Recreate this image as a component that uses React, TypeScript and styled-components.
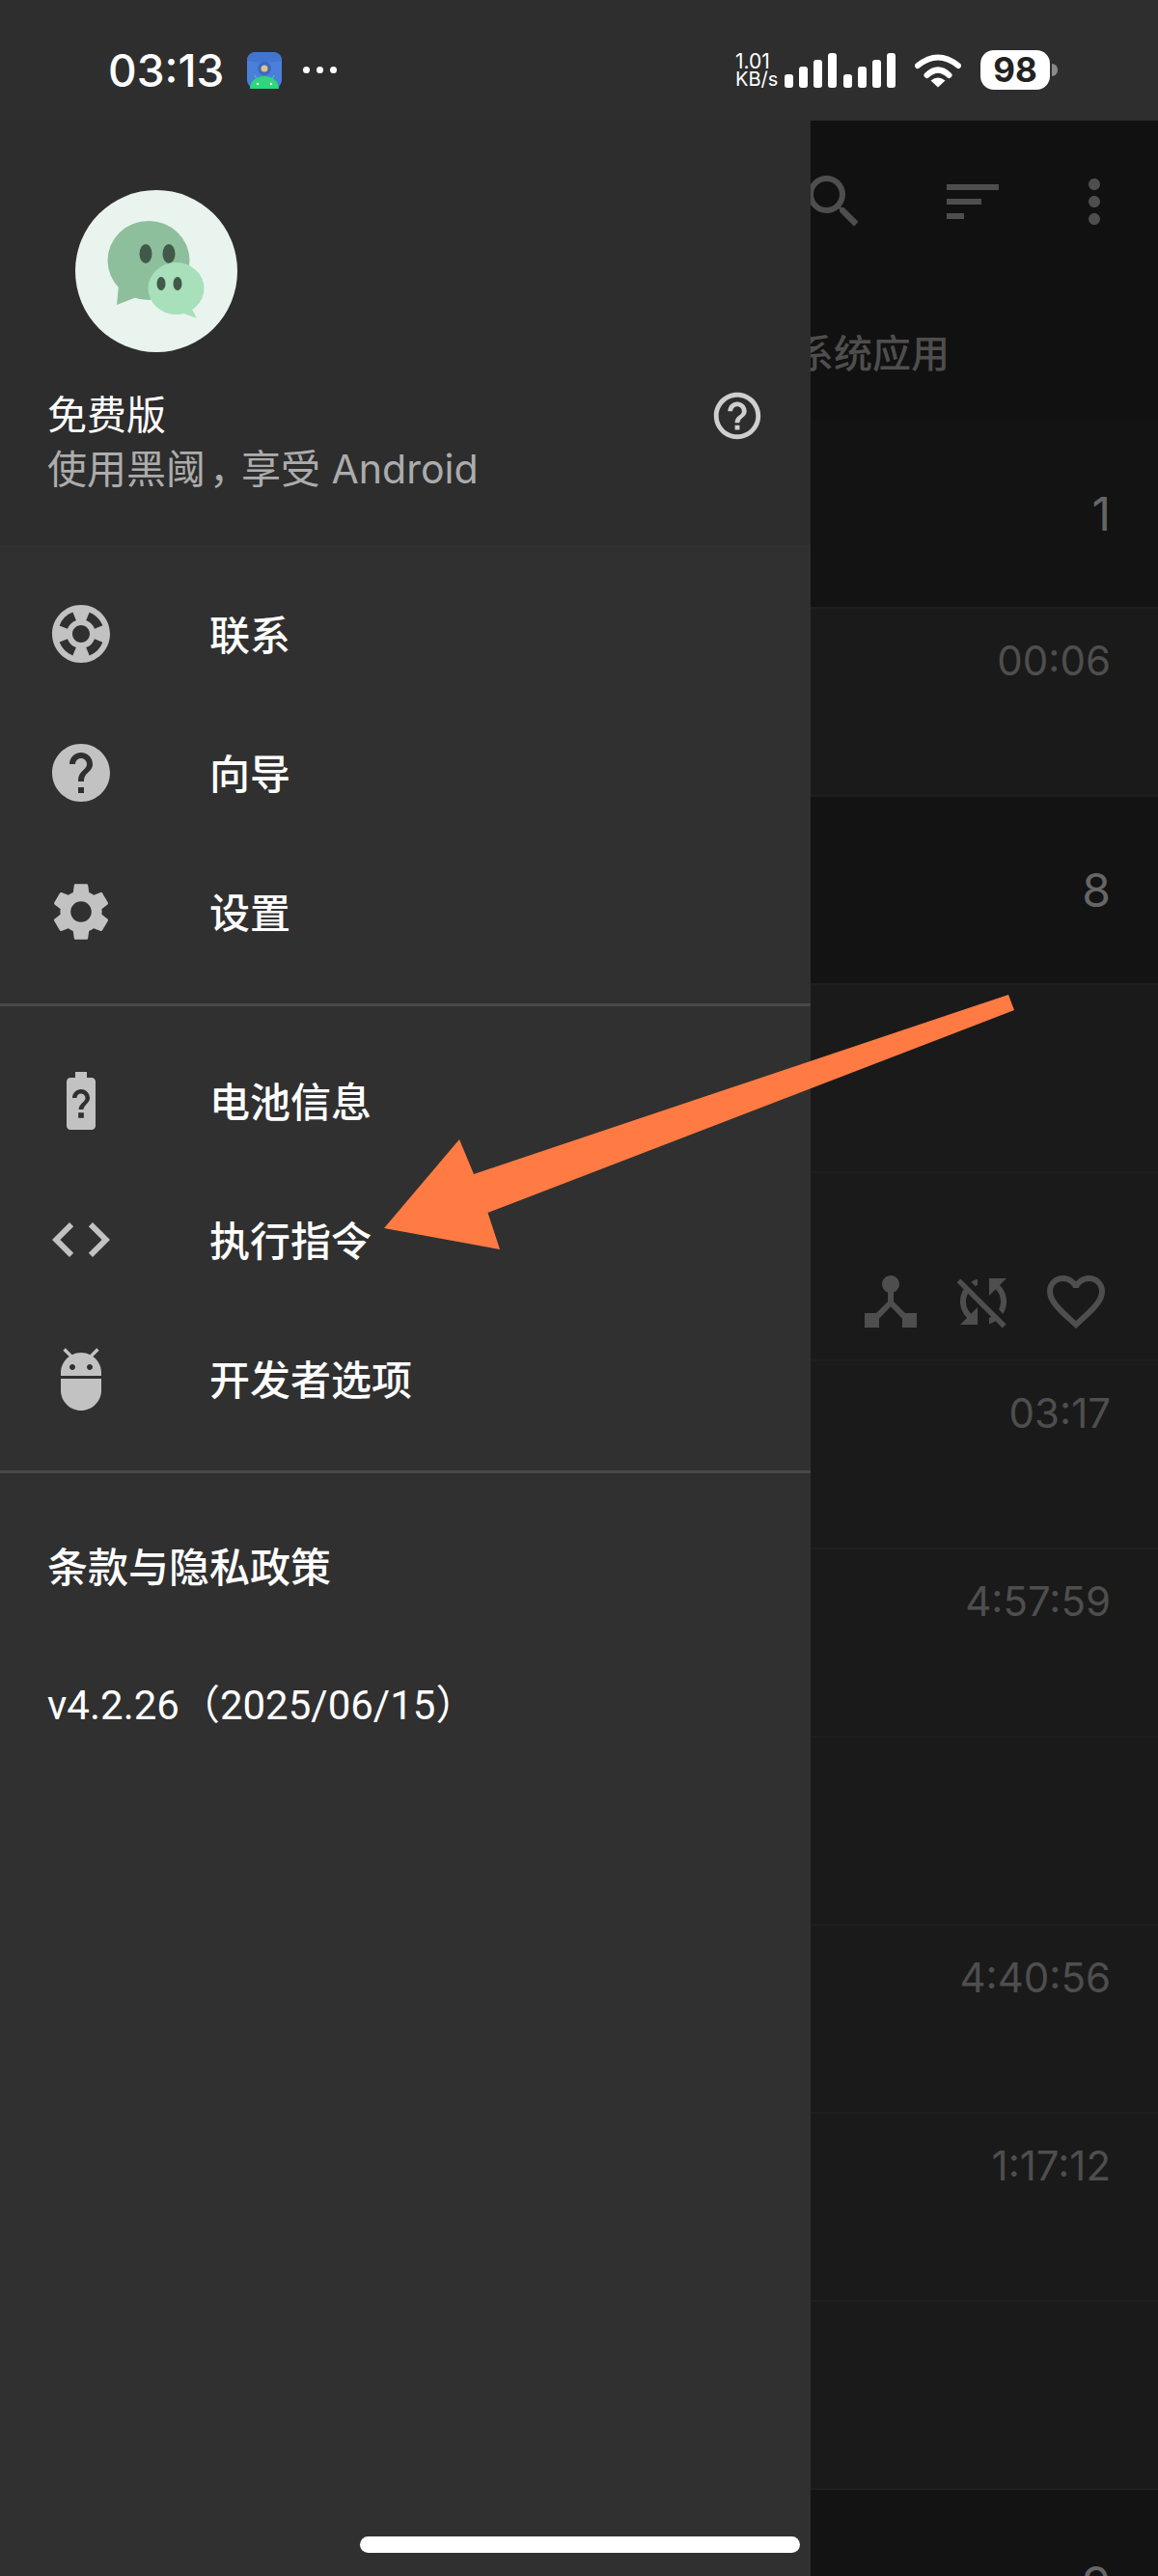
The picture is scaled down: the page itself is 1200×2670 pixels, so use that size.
import {FC, ReactNode} from "react";
import styled, {createGlobalStyle} from "styled-components";
import {
    MdAdb,
    MdBatteryUnknown,
    MdCode,
    MdDeviceHub,
    MdFavoriteBorder,
    MdHelp,
    MdHelpOutline,
    MdMoreVert,
    MdSearch,
    MdSettings,
    MdSort,
    MdSupport,
    MdSyncDisabled,
} from "react-icons/md";

const GlobalStyle = createGlobalStyle`
    html, body {
        margin: 0;
        padding: 0;
        background: #111;
    }
    body {
        font-family: Inter, "Noto Sans CJK SC", sans-serif;
    }
`;

type RowItem = {
    tone: "dark" | "light";
    count?: string;
    time?: string;
    actions?: boolean;
};

const rows: RowItem[] = [
    {tone: "dark", count: "1"},
    {tone: "light", time: "00:06"},
    {tone: "dark", count: "8"},
    {tone: "light"},
    {tone: "light", actions: true},
    {tone: "light", time: "03:17"},
    {tone: "light", time: "4:57:59"},
    {tone: "light"},
    {tone: "light", time: "4:40:56"},
    {tone: "light", time: "1:17:12"},
    {tone: "light"},
    {tone: "dark", count: "9"},
];

const signalHeights = [14, 22, 29, 36, 14, 22, 29, 36];

type MenuItem = {
    icon: ReactNode;
    label: string;
};

const mainMenu: MenuItem[] = [
    {icon: <MdSupport size={72}/>, label: "联系"},
    {icon: <MdHelp size={72}/>, label: "向导"},
    {icon: <MdSettings size={72}/>, label: "设置"},
];

const toolMenu: MenuItem[] = [
    {icon: <MdBatteryUnknown size={72}/>, label: "电池信息"},
    {icon: <MdCode size={72}/>, label: "执行指令"},
    {icon: <MdAdb size={72}/>, label: "开发者选项"},
];

const MenuSection: FC<{items: MenuItem[]}> = ({items}) => (
    <Section>
        {items.map((item) => (
            <MenuRow key={item.label}>
                <MenuIcon>{item.icon}</MenuIcon>
                <MenuLabel>{item.label}</MenuLabel>
            </MenuRow>
        ))}
    </Section>
);

const AppIcon = () => (
    <svg width="36" height="38" viewBox="0 0 36 38">
        <rect width="36" height="38" rx="9" fill="#4a7fdc"/>
        <path d="M0 9C0 3 4 0 9 0H27C32 0 36 3 36 9C28 11 8 11 0 9Z" fill="#4275d2"/>
        <circle cx="18" cy="17" r="7" fill="#3f68b8"/>
        <circle cx="18" cy="17" r="3.500" fill="#d9c48c"/>
        <path d="M8 24l3 6M28 24l-3 6" stroke="#5ec99a" strokeWidth="1"/>
        <path d="M3 38c0-8 7-13 15-13s15 5 15 13z" fill="#2fd67c"/>
        <circle cx="11" cy="33" r="1.200" fill="#fff"/>
        <circle cx="25" cy="33" r="1.200" fill="#fff"/>
    </svg>
);

const WifiIcon = () => (
    <svg width="48" height="36" viewBox="0 0 48 36">
        <path d="M3 13Q24 -4 45 13" fill="none" stroke="#fff" strokeWidth="6" strokeLinecap="round"/>
        <path d="M12.500 23Q24 12 35.500 23" fill="none" stroke="#fff" strokeWidth="6" strokeLinecap="round"/>
        <path d="M24 35.500L16.500 28.500Q24 22.500 31.500 28.500Z" fill="#fff"/>
    </svg>
);

const Avatar = () => (
    <AvatarCircle>
        <svg width="168" height="168" viewBox="0 0 168 168">
            <ellipse cx="76" cy="73" rx="42.500" ry="41" fill="#8dbf9c"/>
            <path d="M45 98L43 119L66 110Z" fill="#8dbf9c"/>
            <ellipse cx="73" cy="66" rx="6.500" ry="10" fill="#42594a"/>
            <ellipse cx="97" cy="66" rx="6.500" ry="10" fill="#42594a"/>
            <ellipse cx="104.500" cy="102" rx="29" ry="27" fill="#a7e0bb"/>
            <path d="M118 118L126 133L110 127Z" fill="#a7e0bb"/>
            <ellipse cx="89" cy="97" rx="4.500" ry="7" fill="#42594a"/>
            <ellipse cx="106" cy="97" rx="4.500" ry="7" fill="#42594a"/>
        </svg>
    </AvatarCircle>
);

export default function App() {
    return (
        <Page>
            <GlobalStyle/>
            <StatusBar>
                <Clock>03:13</Clock>
                <AppIcon/>
                <Dots>
                    <i/><i/><i/>
                </Dots>
                <StatusRight>
                    <NetSpeed>
                        <span>1.01</span>
                        <small>KB/s</small>
                    </NetSpeed>
                    <Signal>
                        {signalHeights.map((h, i) => (
                            <SignalBar key={i} $height={h} $groupStart={i === 4}/>
                        ))}
                    </Signal>
                    <WifiIcon/>
                    <Battery>98</Battery>
                    <BatteryNub/>
                </StatusRight>
            </StatusBar>

            <Backdrop>
                <Toolbar>
                    <MdSearch size={72}/>
                    <MdSort size={72}/>
                    <MdMoreVert size={72}/>
                </Toolbar>
                <Tabs>系统应用</Tabs>
                {rows.map((row, index) => (
                    <Row key={index} $tone={row.tone} $center={!!row.count}>
                        {row.count && <Count>{row.count}</Count>}
                        {row.time && <Time>{row.time}</Time>}
                        {row.actions && (
                            <RowActions>
                                <MdDeviceHub size={72}/>
                                <MdSyncDisabled size={72}/>
                                <MdFavoriteBorder size={72}/>
                            </RowActions>
                        )}
                    </Row>
                ))}
            </Backdrop>

            <Drawer>
                <DrawerHeader>
                    <Avatar/>
                    <PlanRow>
                        <PlanText>
                            <PlanTitle>免费版</PlanTitle>
                            <PlanSub>使用黑阈<Comma>，</Comma>享受 Android</PlanSub>
                        </PlanText>
                        <HelpButton><MdHelpOutline size={58}/></HelpButton>
                    </PlanRow>
                </DrawerHeader>
                <DrawerBody>
                    <MenuSection items={mainMenu}/>
                    <Divider/>
                    <MenuSection items={toolMenu}/>
                    <Divider/>
                    <FooterLinks>
                        <FooterLink>条款与隐私政策</FooterLink>
                        <VersionLink>v4.2.26（2025/06/15）</VersionLink>
                    </FooterLinks>
                </DrawerBody>
            </Drawer>

            <Arrow viewBox="0 0 1200 2670" width="1200" height="2670">
                <polygon
                    points="1045,1031 1051,1047 505.500,1257 518,1295 398,1273 476,1181 491,1217"
                    fill="#ff7b43"
                />
            </Arrow>
            <GestureBar/>
        </Page>
    );
}

const Page = styled.div`
    position: relative;
    width: 1200px;
    height: 2670px;
    overflow: hidden;
    background: #111;
`;

const StatusBar = styled.div`
    height: 125px;
    box-sizing: border-box;
    padding: 20px 104px 0 112px;
    display: flex;
    align-items: center;
    background: #2e2e2e;
    color: #fff;
`;

const Clock = styled.div`
    width: 119px;
    margin-right: 25px;
    font-size: 46px;
    font-weight: 500;
    line-height: 50px;
    white-space: nowrap;
`;

const Dots = styled.div`
    display: flex;
    gap: 7px;
    margin-left: 22px;
    i {
        width: 7px;
        height: 7px;
        border-radius: 50%;
        background: #fff;
    }
`;

const StatusRight = styled.div`
    margin-left: auto;
    display: flex;
    align-items: center;
`;

const NetSpeed = styled.div`
    display: flex;
    flex-direction: column;
    width: 51px;
    font-size: 21px;
    line-height: 18px;
    small {
        font-size: 20px;
    }
`;

const Signal = styled.div`
    display: flex;
    align-items: flex-end;
    height: 36px;
    gap: 6px;
    margin-right: 20px;
`;

const SignalBar = styled.div<{$height: number; $groupStart: boolean}>`
    width: 9px;
    height: ${(p) => p.$height}px;
    margin-left: ${(p) => (p.$groupStart ? 1 : 0)}px;
    border-radius: 3px;
    background: #fff;
`;

const Battery = styled.div`
    width: 72px;
    height: 41px;
    margin-left: 20px;
    border-radius: 14px;
    background: #fff;
    color: #222;
    font-size: 35px;
    font-weight: 700;
    line-height: 41px;
    text-align: center;
`;

const BatteryNub = styled.div`
    width: 6px;
    height: 13px;
    margin-left: 2px;
    border-radius: 0 6px 6px 0;
    background: #8a8a8a;
`;

const Backdrop = styled.div`
    color: #4e4e4e;
`;

const Toolbar = styled.div`
    height: 183px;
    box-sizing: border-box;
    padding: 48px 30px 0 0;
    display: flex;
    justify-content: flex-end;
    align-items: flex-start;
    background: #111;
    svg:nth-child(1) {
        margin-right: 72px;
    }
    svg:nth-child(2) {
        margin-right: 54px;
    }
`;

const Tabs = styled.div`
    height: 128px;
    box-sizing: border-box;
    padding: 33px 216px 0 0;
    text-align: right;
    font-size: 40px;
    font-weight: 500;
    line-height: 52px;
    background: #111;
`;

const Row = styled.div<{$tone: "dark" | "light"; $center: boolean}>`
    height: 195px;
    box-sizing: border-box;
    padding: ${(p) => (p.$center ? "0" : "29px")} 49px 0 0;
    display: flex;
    justify-content: flex-end;
    align-items: ${(p) => (p.$center ? "center" : "flex-start")};
    background: ${(p) => (p.$tone === "dark" ? "#131313" : "#1a1a1a")};
    border-bottom: 2px solid #1e1e1e;
`;

const Count = styled.div`
    font-size: 48px;
    line-height: 50px;
    color: #666;
`;

const Time = styled.div`
    font-size: 42px;
    line-height: 50px;
`;

const RowActions = styled.div`
    display: flex;
    gap: 24px;
    margin-top: 68px;
`;

const Drawer = styled.div`
    position: absolute;
    top: 125px;
    left: 0;
    bottom: 0;
    width: 840px;
    display: flex;
    flex-direction: column;
    background: #303030;
`;

const DrawerHeader = styled.div`
    height: 440px;
    box-sizing: border-box;
    padding: 72px 0 0 49px;
    background: #2d2d2d;
`;

const AvatarCircle = styled.div`
    width: 168px;
    height: 168px;
    margin-left: 29px;
    border-radius: 50%;
    background: #eaf4ee;
    svg {
        display: block;
    }
`;

const PlanRow = styled.div`
    display: flex;
    align-items: flex-start;
    justify-content: space-between;
    margin-top: 37px;
    padding-right: 47px;
`;

const PlanText = styled.div`
    display: flex;
    flex-direction: column;
`;

const PlanTitle = styled.div`
    font-size: 41px;
    line-height: 56px;
    color: #fff;
`;

const PlanSub = styled.div`
    font-size: 41px;
    line-height: 56px;
    color: #acacac;
`;

const Comma = styled.span`
    margin-left: 4px;
    letter-spacing: -8px;
`;

const HelpButton = styled.div`
    display: flex;
    color: #cfcfcf;
`;

const DrawerBody = styled.div`
    flex: 1;
    padding-top: 20px;
`;

const Section = styled.div`
    display: flex;
    flex-direction: column;
`;

const MenuRow = styled.div`
    height: 144px;
    display: flex;
    align-items: center;
    padding-left: 48px;
`;

const MenuIcon = styled.div`
    width: 72px;
    height: 72px;
    margin-right: 97px;
    color: #c2c2c2;
    svg {
        display: block;
    }
`;

const MenuLabel = styled.div`
    padding-top: 3px;
    font-size: 42px;
    font-weight: 500;
    line-height: 56px;
    color: #fff;
`;

const Divider = styled.div`
    height: 3px;
    margin: 23px 0 26px;
    background: #484848;
`;

const FooterLinks = styled.div`
    display: flex;
    flex-direction: column;
`;

const FooterLink = styled.div`
    height: 144px;
    display: flex;
    align-items: center;
    padding-left: 49px;
    font-size: 42px;
    font-weight: 500;
    line-height: 56px;
    color: #fff;
`;

const VersionLink = styled(FooterLink)`
    margin-top: -1px;
    font-family: Roboto, "Noto Sans CJK SC", sans-serif;
    font-weight: 400;
`;

const Arrow = styled.svg`
    position: absolute;
    top: 0;
    left: 0;
    pointer-events: none;
`;

const GestureBar = styled.div`
    position: absolute;
    left: 373px;
    top: 2629px;
    width: 456px;
    height: 17px;
    border-radius: 9px;
    background: #fff;
`;
